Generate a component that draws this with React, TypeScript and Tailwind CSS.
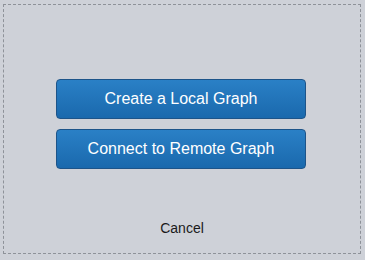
export default function App() {
  return (
    <div className="h-[260px] w-[365px] bg-[#ced1d8] pl-[3px] pr-[4px] pt-[4px] pb-[6px] font-['Liberation_Sans',Arial,sans-serif]">
      <div className="flex h-full flex-col items-center border border-dashed border-[#8e9299]">
        <div className="mt-[74px] mr-[2px] flex flex-col gap-[10px]">
          <button className="h-[40px] w-[250px] rounded-[4px] border border-[#1d5489] bg-gradient-to-b from-[#2a80c6] to-[#1a69ad] text-[16px] text-white">
            Create a Local Graph
          </button>
          <button className="h-[40px] w-[250px] rounded-[4px] border border-[#1d5489] bg-gradient-to-b from-[#2a80c6] to-[#1a69ad] text-[16px] text-white">
            Connect to Remote Graph
          </button>
        </div>
        <button className="mt-[49px] text-[14px] text-[#1a1a1a]">Cancel</button>
      </div>
    </div>
  )
}
